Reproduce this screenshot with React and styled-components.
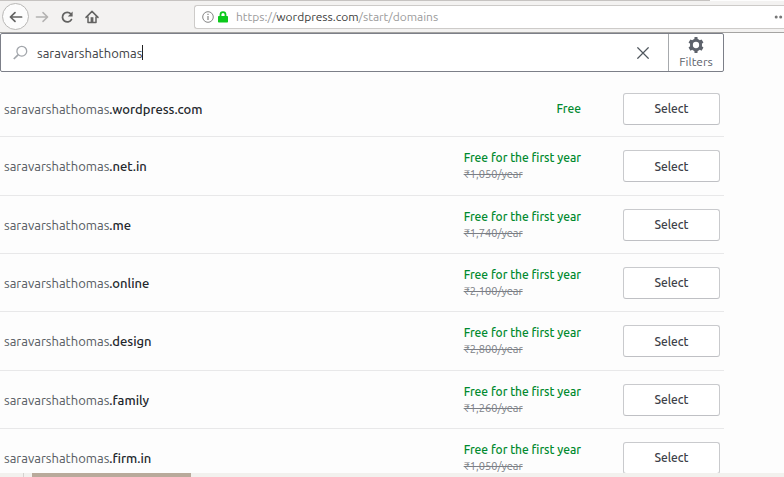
import React from "react";
import styled, { createGlobalStyle } from "styled-components";

const GlobalStyle = createGlobalStyle`
  *, *::before, *::after { box-sizing: border-box; }
  body {
    margin: 0;
    background: #fdfdfd;
    color: #2e3338;
    font-family: Ubuntu, "Noto Sans", sans-serif;
    font-size: 13px;
  }
  button, input { font: inherit; color: inherit; }
`;

const Window = styled.div`
  display: flex;
  flex-direction: column;
  height: 100vh;
  overflow: hidden;
`;

const TabEdge = styled.div`
  flex: none;
  height: 1px;
  margin-right: 74px;
  background: #c6c3c1;
`;

const Toolbar = styled.header`
  flex: none;
  display: flex;
  align-items: center;
  height: 32px;
  padding-left: 2px;
  background: #f3f2f1;
  border-bottom: 1px solid #a5a4a2;
`;

const ToolButton = styled.button`
  display: grid;
  place-items: center;
  flex: none;
  width: ${(p) => (p.$round ? 27 : 25)}px;
  height: ${(p) => (p.$round ? 27 : 25)}px;
  padding: 0;
  border: ${(p) => (p.$round ? "1px solid #b9b8b6" : "0")};
  border-radius: 50%;
  background: ${(p) => (p.$round ? "#fcfcfc" : "transparent")};
  color: ${(p) => (p.$muted ? "#b3b2b1" : "#636362")};
`;

const AddressBar = styled.div`
  flex: 1;
  display: flex;
  align-items: center;
  min-width: 0;
  height: 24px;
  margin-left: 90px;
  padding-left: 7px;
  background: #fff;
  border: 1px solid #cdcbc9;
  border-right: 0;
  border-radius: 3px 0 0 3px;
  font-size: 12px;
`;

const Address = styled.a`
  flex: 1;
  margin-left: 6px;
  color: #9b9b9b;
  text-decoration: none;
  white-space: nowrap;
`;

const Host = styled.span`
  color: #3c3c3c;
`;

const Page = styled.main`
  flex: 1;
  min-height: 0;
  overflow: hidden;
  padding-right: 60px;
`;

const SearchCard = styled.form`
  display: flex;
  height: 39px;
  background: #fff;
  border: 1px solid #7c7f88;
  border-radius: 2px;
`;

const SearchField = styled.label`
  flex: 1;
  display: flex;
  align-items: center;
  min-width: 0;
  padding-left: 12px;
`;

const SearchInput = styled.input`
  field-sizing: content;
  margin-left: 9px;
  padding: 0;
  border: 0;
  outline: 0;
  background: transparent;
  color: #3d4145;
`;

const Caret = styled.span`
  width: 1px;
  height: 15px;
  background: #222;
`;

const ClearButton = styled.button`
  display: grid;
  place-items: center;
  width: 51px;
  padding: 0;
  border: 0;
  background: transparent;
  color: #50575e;
`;

const FilterButton = styled.button`
  display: flex;
  flex-direction: column;
  align-items: center;
  justify-content: center;
  width: 55px;
  padding: 0;
  border: 0;
  border-left: 1px solid #a7aaad;
  background: transparent;
  color: #5d626b;
  font-size: 12px;
  line-height: 16px;
`;

const Results = styled.ul`
  margin: 9px 0 0;
  padding: 0;
  list-style: none;
`;

const Result = styled.li`
  display: flex;
  align-items: center;
  height: 58px;
  padding: 0 4px;
  border-bottom: 1px solid #e8e8e9;

  &:first-child { height: 56px; }
  &:nth-child(3n + 2) { height: 59px; }
`;

const Domain = styled.h3`
  flex: 1;
  margin: 0;
  color: #565b62;
  font-size: 13px;
  font-weight: 400;
`;

const Extension = styled.span`
  color: #22262b;
  font-weight: 500;
`;

const Pricing = styled.div`
  margin-right: 42px;
  color: #008a2e;
  font-size: 12px;
  font-weight: 500;
  line-height: 17px;
`;

const OldPrice = styled.del`
  display: block;
  color: #7c7f86;
  font-size: 11px;
  font-weight: 400;
`;

const SelectButton = styled.button`
  width: 97px;
  height: 32px;
  padding: 0;
  border: 1px solid #c9cacd;
  border-bottom-color: #bfc0c4;
  border-radius: 3px;
  background: #fff;
  color: #3c4047;
  font-size: 12px;
  font-weight: 500;
`;

const StatusStrip = styled.footer`
  flex: none;
  display: flex;
  height: 4px;
  background: #f2f1ee;
`;

const StripItem = styled.span`
  width: ${(p) => p.$width}px;
  margin-right: ${(p) => p.$gap || 0}px;
  border-right: ${(p) => (p.$active ? "0" : "1px solid #d5d3d0")};
  background: ${(p) => (p.$active ? "#b9aa9b" : "transparent")};
`;

const Icon = ({ size = 16, width = 2, children }) => (
  <svg
    width={size}
    height={size}
    viewBox="0 0 16 16"
    fill="none"
    stroke="currentColor"
    strokeWidth={width}
    strokeLinecap="round"
    strokeLinejoin="round"
    aria-hidden="true"
  >
    {children}
  </svg>
);

const results = [
  { extension: ".wordpress.com", offer: "Free" },
  { extension: ".net.in", offer: "Free for the first year", price: "₹1,050/year" },
  { extension: ".me", offer: "Free for the first year", price: "₹1,740/year" },
  { extension: ".online", offer: "Free for the first year", price: "₹2,100/year" },
  { extension: ".design", offer: "Free for the first year", price: "₹2,800/year" },
  { extension: ".family", offer: "Free for the first year", price: "₹1,260/year" },
  { extension: ".firm.in", offer: "Free for the first year", price: "₹1,050/year" },
];

export default function App() {
  return (
    <Window>
      <GlobalStyle />
      <TabEdge />
      <Toolbar>
        <ToolButton $round aria-label="Back">
          <Icon width={1.7}>
            <path d="M13.6 8H2.6M7 3.6 2.4 8 7 12.4" />
          </Icon>
        </ToolButton>
        <ToolButton $muted aria-label="Forward">
          <Icon width={1.5}>
            <path d="M2.4 8h11M9 3.6 13.6 8 9 12.4" />
          </Icon>
        </ToolButton>
        <ToolButton aria-label="Reload">
          <Icon width={1.8}>
            <path d="M12.4 10.6A4.8 4.8 0 1 1 11.8 4.9" />
            <path d="M13.6 2.6v4.8H8.8z" fill="currentColor" stroke="none" />
          </Icon>
        </ToolButton>
        <ToolButton aria-label="Home">
          <Icon width={1.5}>
            <path d="M2 8.4 8 2.4l6 6M4 8v5.4h8V8" />
            <path d="M8 13.4V8.2" strokeWidth="2.8" strokeLinecap="butt" />
          </Icon>
        </ToolButton>
        <AddressBar>
          <svg width="12" height="12" viewBox="0 0 12 12" fill="none" stroke="#858585" aria-hidden="true">
            <circle cx="6" cy="6" r="5.3" />
            <path d="M6 5v4M6 2.7v1.3" strokeWidth="1.2" />
          </svg>
          <svg width="16" height="12" viewBox="0 0 16 12" fill="none" aria-hidden="true">
            <path d="M6.5 6V3.6a2.5 2.5 0 0 1 5 0V6" stroke="#0bc91b" strokeWidth="1.8" />
            <rect x="4" y="5" width="10" height="6.6" rx="0.8" fill="#0bc91b" />
          </svg>
          <Address href="#domains">
            https://<Host>wordpress.com</Host>/start/domains
          </Address>
          <svg width="10" height="4" viewBox="0 0 10 4" fill="#777" aria-hidden="true">
            <circle cx="2.2" cy="2" r="1.5" />
            <circle cx="6.7" cy="2" r="1.5" />
          </svg>
        </AddressBar>
      </Toolbar>

      <Page>
        <SearchCard onSubmit={(e) => e.preventDefault()}>
          <SearchField>
            <svg width="15" height="15" viewBox="0 0 15 15" fill="none" stroke="#a2a6ab" strokeWidth="1.3" aria-hidden="true">
              <circle cx="8.8" cy="6.2" r="4.9" />
              <path d="M5.3 9.7.8 14" strokeWidth="1.7" />
            </svg>
            <SearchInput aria-label="Search domains" defaultValue="saravarshathomas" />
            <Caret />
          </SearchField>
          <ClearButton type="button" aria-label="Clear search">
            <Icon size={14} width={1.4}>
              <path d="m2 2 12 12M14 2 2 14" />
            </Icon>
          </ClearButton>
          <FilterButton type="button">
            <svg width="18" height="18" viewBox="0 0 24 24" fill="currentColor" aria-hidden="true">
              <path d="M20 12c0-.57-.06-1.13-.17-1.66l2.1-1.51-2.5-4.33-2.36 1.06a8 8 0 0 0-2.87-1.65L13.92 1.3h-3.84l-.28 2.6a8 8 0 0 0-2.87 1.66L4.57 4.5l-2.5 4.33 2.1 1.51a8.1 8.1 0 0 0 0 3.32l-2.1 1.51 2.5 4.33 2.36-1.06a8 8 0 0 0 2.87 1.65l.28 2.61h3.84l.28-2.6a8 8 0 0 0 2.87-1.66l2.36 1.06 2.5-4.33-2.1-1.51c.11-.53.17-1.09.17-1.66zm-8 4.2a4.2 4.2 0 1 1 0-8.4 4.2 4.2 0 0 1 0 8.4z" />
            </svg>
            Filters
          </FilterButton>
        </SearchCard>

        <Results>
          {results.map(({ extension, offer, price }) => (
            <Result key={extension}>
              <Domain>
                saravarshathomas<Extension>{extension}</Extension>
              </Domain>
              <Pricing>
                {offer}
                {price && <OldPrice>{price}</OldPrice>}
              </Pricing>
              <SelectButton type="button" aria-label={`Select saravarshathomas${extension}`}>
                Select
              </SelectButton>
            </Result>
          ))}
        </Results>
      </Page>

      <StatusStrip>
        <StripItem $width={24} $gap={8} />
        <StripItem $width={159} $active />
      </StatusStrip>
    </Window>
  );
}
